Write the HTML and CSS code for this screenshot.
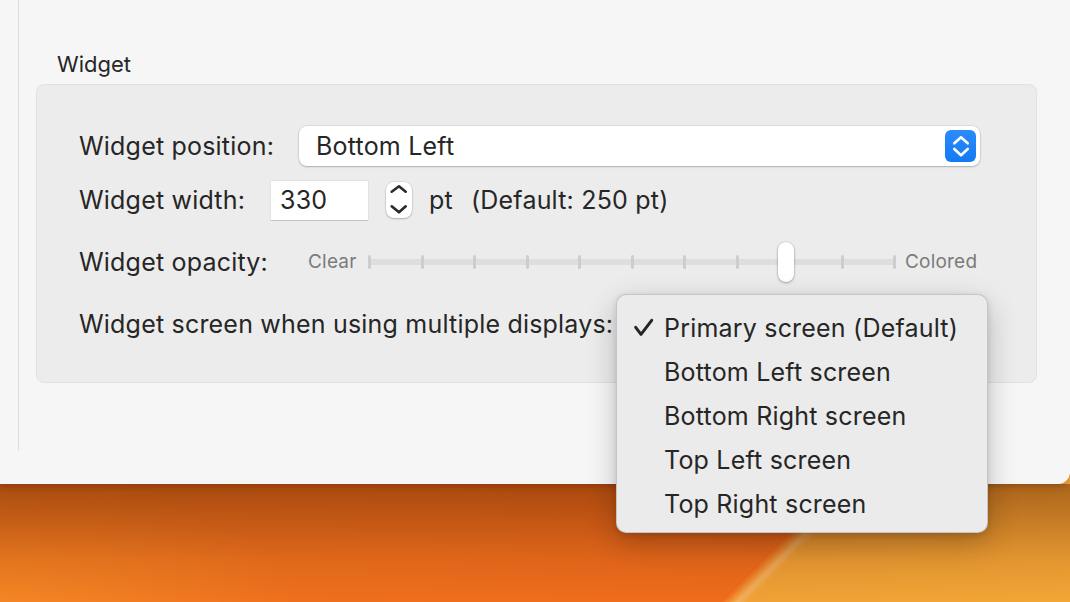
FILE: index.html
```html
<!DOCTYPE html>
<html lang="en">
<head>
<meta charset="utf-8">
<title>Widget settings</title>
<link rel="stylesheet" href="styles.css">
</head>
<body>
<div class="desktop">
  <div class="window">
    <div class="sidebar"></div>
    <div class="content">
      <div class="section-title">Widget</div>
      <div class="group">
        <div class="row row-position">
          <span class="label label-position">Widget position:</span>
          <div class="popup">
            <span class="popup-value">Bottom Left</span>
            <span class="popup-arrows">
              <svg width="31" height="32" viewBox="0 0 31 32"><path d="M9.3 13.3 L16 7.3 L22.7 13.3 M9.3 19 L16 25.3 L22.7 19" fill="none" stroke="#fff" stroke-width="2.6" stroke-linecap="round" stroke-linejoin="round"/></svg>
            </span>
          </div>
        </div>
        <div class="row row-width">
          <span class="label label-width">Widget width:</span>
          <div class="textfield">330</div>
          <div class="stepper">
            <svg width="26" height="36" viewBox="0 0 26 36"><path d="M5.7 9.7 L13 4.3 L19.7 9.7 M5.7 24.3 L13 30.3 L19.7 24.3" fill="none" stroke="#2a2a2a" stroke-width="2.6" stroke-linecap="round" stroke-linejoin="round"/></svg>
          </div>
          <span class="unit">pt</span>
          <span class="hint">(Default: 250 pt)</span>
        </div>
        <div class="row row-opacity">
          <span class="label label-opacity">Widget opacity:</span>
          <span class="slider-end slider-min">Clear</span>
          <div class="slider">
            <div class="track">
              <i class="tick"></i><i class="tick"></i><i class="tick"></i><i class="tick"></i><i class="tick"></i><i class="tick"></i><i class="tick"></i><i class="tick"></i><i class="tick"></i><i class="tick"></i><i class="tick"></i>
            </div>
            <div class="knob"></div>
          </div>
          <span class="slider-end slider-max">Colored</span>
        </div>
        <div class="row row-screen">
          <span class="label">Widget screen when using multiple displays:</span>
        </div>
      </div>
    </div>
  </div>
  <div class="menu">
    <div class="menu-item">
      <span class="check"><svg width="24" height="22" viewBox="0 0 24 22"><path d="M3.7 10.3 L9 17.3 L19.7 3.3" fill="none" stroke="#262626" stroke-width="3" stroke-linecap="round" stroke-linejoin="round"/></svg></span>
      <span>Primary screen (Default)</span>
    </div>
    <div class="menu-item"><span class="check"></span><span>Bottom Left screen</span></div>
    <div class="menu-item"><span class="check"></span><span>Bottom Right screen</span></div>
    <div class="menu-item"><span class="check"></span><span>Top Left screen</span></div>
    <div class="menu-item"><span class="check"></span><span>Top Right screen</span></div>
  </div>
</div>
</body>
</html>
```
FILE: styles.css
```css
html, body {
  margin: 0;
  padding: 0;
}
body {
  width: 1070px;
  height: 602px;
  overflow: hidden;
  font-family: "Inter", "Noto Sans", "Liberation Sans", sans-serif;
  color: #262626;
}
.desktop {
  position: relative;
  width: 1070px;
  height: 602px;
  background:
    linear-gradient(180deg, rgba(110, 40, 5, 0) 0, rgba(110, 40, 5, 0) 484px, rgba(100, 35, 0, 0.5) 484px, rgba(110, 40, 5, 0.12) 560px, rgba(110, 40, 5, 0) 602px),
    radial-gradient(ellipse 300px 120px at 0 602px, rgba(250, 150, 40, 0.55), rgba(250, 150, 40, 0)),
    linear-gradient(135deg, #ee7822 0, #ef6c1c 936px, #f2a040 944px, #f3b060 947px, #f1a236 954px, #f3a636 100%);
}
.window {
  display: flex;
  width: 1070px;
  height: 484px;
  background: #f6f6f6;
  border-bottom-right-radius: 12px;
  box-shadow: 0 2px 6px rgba(60, 20, 0, 0.25);
}
.sidebar {
  flex: 0 0 18px;
  height: 451px;
  border-right: 1px solid #dddddd;
}
.content {
  flex: 1;
  padding: 50px 0 0 17px;
}
.section-title {
  margin-left: 21px;
  font-size: 22px;
  line-height: 28px;
  margin-bottom: 6px;
}
.group {
  box-sizing: border-box;
  width: 1001px;
  height: 299px;
  padding: 41px 0 0 42px;
  border: 1px solid #e2e2e2;
  border-radius: 8px;
  background: #ececec;
}
.row {
  display: flex;
  align-items: center;
  height: 40px;
  font-size: 25px;
  letter-spacing: 0.2px;
  line-height: 32px;
  white-space: nowrap;
}
.row-width { margin-top: 14px; }
.row-opacity { margin-top: 22px; }
.row-screen { margin-top: 22px; }
.label-position { flex: 0 0 220px; }
.label-width { flex: 0 0 192px; }
.label-opacity { flex: 0 0 229px; }

.popup {
  display: flex;
  align-items: center;
  justify-content: space-between;
  box-sizing: border-box;
  width: 681px;
  height: 40px;
  padding: 0 4px 0 17px;
  background: #ffffff;
  border-radius: 8px;
  box-shadow: 0 0 0 0.5px rgba(0, 0, 0, 0.12), 0 1px 2px rgba(0, 0, 0, 0.22);
}
.popup-arrows {
  display: flex;
  width: 31px;
  height: 32px;
  border-radius: 6px;
  background: linear-gradient(180deg, #2b8bfa 0%, #137af5 100%);
}
.textfield {
  box-sizing: border-box;
  width: 97px;
  height: 39px;
  padding: 0 9px;
  background: #ffffff;
  line-height: 39px;
  box-shadow: 0 0 0 0.5px rgba(0, 0, 0, 0.08), 0 1px 0 rgba(0, 0, 0, 0.14);
}
.stepper {
  display: flex;
  margin-left: 18px;
  width: 26px;
  height: 36px;
  background: #ffffff;
  border-radius: 8px;
  box-shadow: 0 0 0 0.5px rgba(0, 0, 0, 0.12), 0 1px 2px rgba(0, 0, 0, 0.22);
}
.unit {
  margin-left: 17px;
  flex: 0 0 42px;
}
.slider-end {
  font-size: 19px;
  letter-spacing: 0.2px;
  color: #7b7b7b;
}
.slider-min { flex: 0 0 60px; }
.slider-max { margin-left: 9px; }
.slider {
  position: relative;
  display: flex;
  align-items: center;
  width: 528px;
  height: 40px;
}
.track {
  display: flex;
  align-items: center;
  justify-content: space-between;
  width: 100%;
  height: 6px;
  border-radius: 3px;
  background: #dedede;
}
.tick {
  display: block;
  width: 3px;
  height: 14px;
  border-radius: 1.5px;
  background: #cdcdcd;
}
.knob {
  position: absolute;
  left: 410px;
  top: 0;
  width: 16px;
  height: 40px;
  border-radius: 8px;
  background: #ffffff;
  box-shadow: 0 0 0 0.5px rgba(0, 0, 0, 0.12), 0 1px 3px rgba(0, 0, 0, 0.28);
}

.menu {
  position: absolute;
  left: 616px;
  top: 294px;
  box-sizing: border-box;
  width: 372px;
  height: 239px;
  padding-top: 11px;
  background: #ebebeb;
  border-radius: 10px;
  border: 1px solid rgba(0, 0, 0, 0.16);
  box-shadow: 0 10px 30px rgba(0, 0, 0, 0.22), 0 2px 6px rgba(0, 0, 0, 0.12);
  font-size: 25px;
  letter-spacing: 0.2px;
  white-space: nowrap;
}
.menu-item {
  display: flex;
  align-items: center;
  height: 44px;
  line-height: 32px;
}
.check {
  display: flex;
  align-items: center;
  flex: 0 0 48px;
  margin-left: -1px;
}
.check svg { margin-left: 16px; }
```
